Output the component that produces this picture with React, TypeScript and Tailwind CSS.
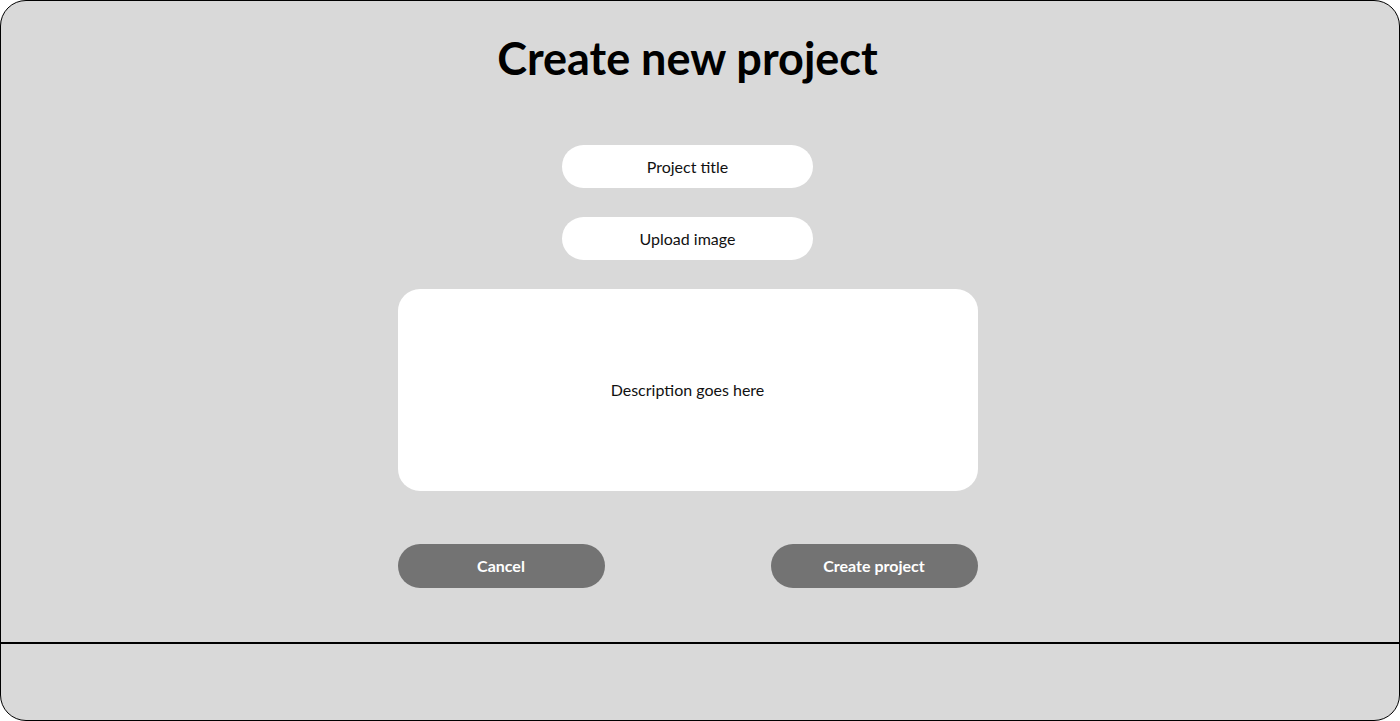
export default function App() {
  return (
    <div className="h-[721px] w-[1400px] bg-white font-['Lato',sans-serif]">
      <div className="flex h-full flex-col overflow-hidden rounded-[26px] border-[1.5px] border-black bg-[#d9d9d9]">
        <main className="flex h-[643px] flex-col items-center border-b-2 border-black pr-[25px]">
          <h1 className="mt-[30px] text-[45px] font-bold leading-[54px] text-black">Create new project</h1>

          <div className="mt-[60px] flex h-[43px] w-[251px] items-center justify-center rounded-full bg-white text-[16px] text-[#111]">
            Project title
          </div>
          <div className="mt-[29px] flex h-[43px] w-[251px] items-center justify-center rounded-full bg-white text-[16px] text-[#111]">
            Upload image
          </div>

          <div className="mt-[29px] flex h-[202px] w-[580px] items-center justify-center rounded-[22px] bg-white text-[16px] text-[#111]">
            Description goes here
          </div>

          <div className="mt-[53px] flex w-[580px] justify-between">
            <button className="h-[44px] w-[207px] rounded-full bg-[#737373] text-[16px] font-bold text-white">
              Cancel
            </button>
            <button className="h-[44px] w-[207px] rounded-full bg-[#737373] text-[16px] font-bold text-white">
              Create project
            </button>
          </div>
        </main>
        <footer className="flex-1" />
      </div>
    </div>
  );
}
